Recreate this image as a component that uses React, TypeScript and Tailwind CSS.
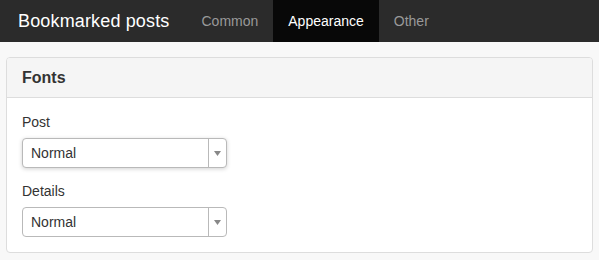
import React from "react";

const tabs = ["Common", "Appearance", "Other"];

function SelectBox({ value, focused }: { value: string; focused?: boolean }) {
    return (
        <div
            className={
                "flex h-[30px] w-[205px] items-stretch rounded-[4px] border border-[#b9b9b9] bg-white " +
                (focused ? "shadow-[0_1px_4px_rgba(0,0,0,0.18)]" : "")
            }
        >
            <div className="flex flex-1 items-center pl-[8px] text-[14px] text-[#333]">{value}</div>
            <div className="flex w-[18px] items-center justify-center border-l border-[#b9b9b9]">
                <svg width="7" height="5" viewBox="0 0 7 5">
                    <path d="M0 0h7L3.5 5z" fill="#888" />
                </svg>
            </div>
        </div>
    );
}

export default function App() {
    return (
        <div className="h-[260px] w-[599px] bg-[#f8f8f8] font-['Liberation_Sans',Arial,sans-serif]">
            <nav className="flex h-[42px] items-stretch bg-[#2b2b2b]">
                <div className="flex items-center pl-[18px] pr-[17px] text-[18px] tracking-[0.15px] text-white">
                    Bookmarked posts
                </div>
                <div className="flex">
                    {tabs.map((t) => (
                        <div
                            key={t}
                            className={
                                "flex items-center px-[15px] text-[14px] " +
                                (t === "Appearance" ? "bg-[#080808] text-white" : "text-[#999]")
                            }
                        >
                            {t}
                        </div>
                    ))}
                </div>
            </nav>
            <div className="px-[6px] pt-[15px]">
                <div className="overflow-hidden rounded-[4px] border border-[#ddd] bg-white">
                    <div className="flex h-[40px] items-center border-b border-[#ddd] bg-[#f5f5f5] px-[15px] text-[16px] font-bold text-[#333]">
                        Fonts
                    </div>
                    <div className="px-[15px] pb-[15px] pt-[14px] text-[14px] text-[#333]">
                        <div className="mb-[6px] leading-[20px]">Post</div>
                        <SelectBox value="Normal" focused />
                        <div className="mb-[6px] mt-[13px] leading-[20px]">Details</div>
                        <SelectBox value="Normal" />
                    </div>
                </div>
            </div>
        </div>
    );
}
